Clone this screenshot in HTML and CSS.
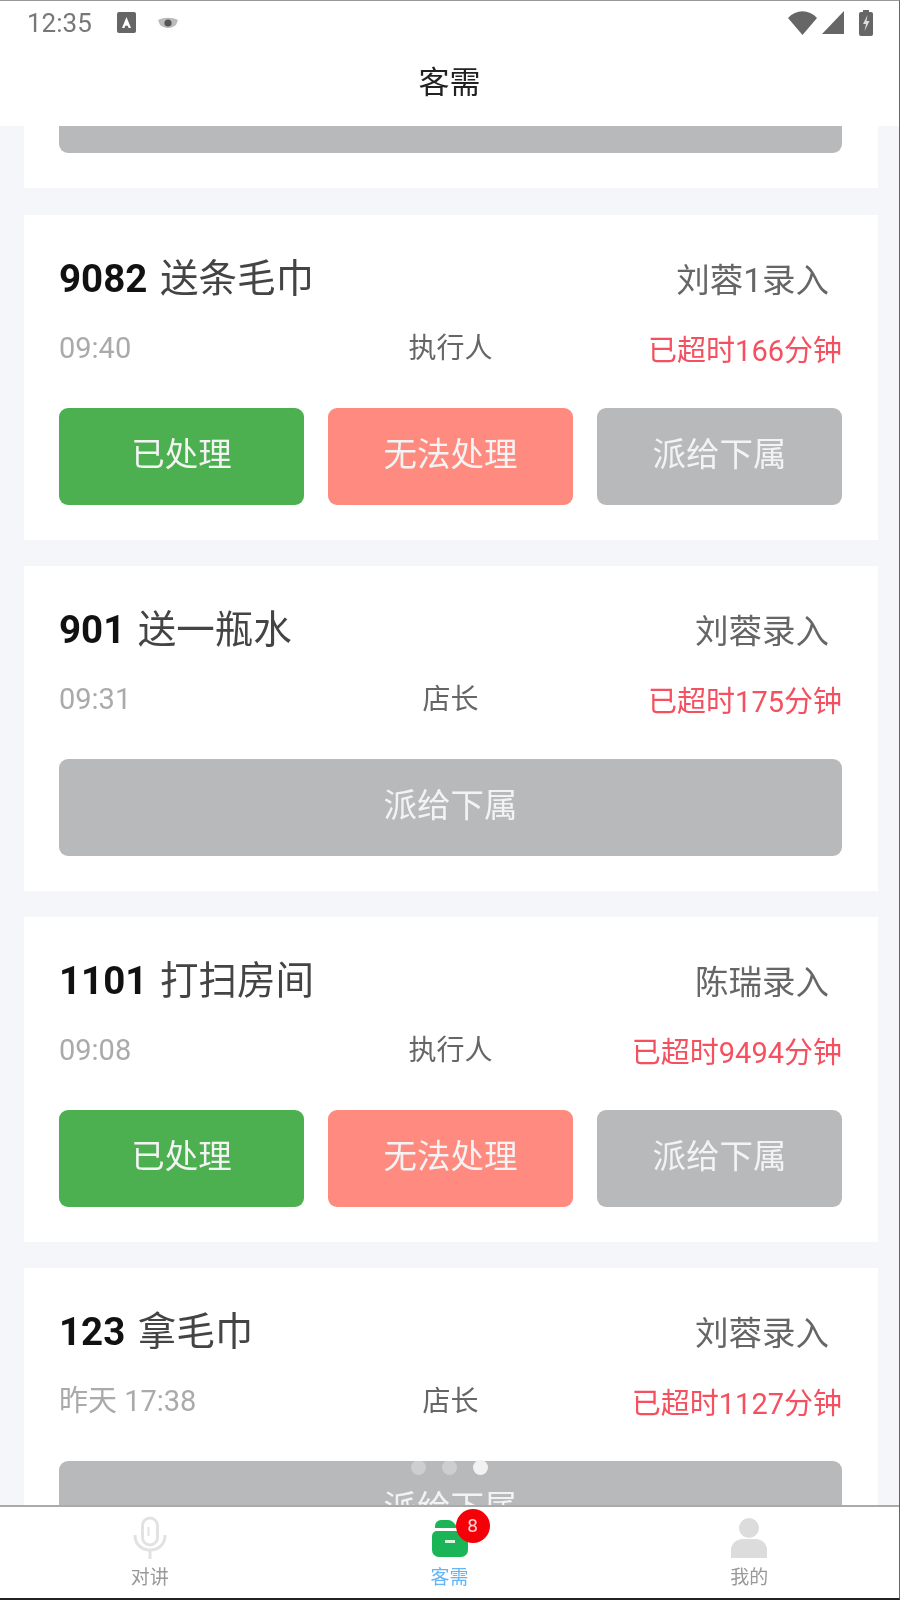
FILE: index.html
```html
<!DOCTYPE html>
<html lang="zh-CN">
<head>
<meta charset="UTF-8">
<meta name="viewport" content="width=device-width, initial-scale=1.0">
<title>客需</title>
<link rel="stylesheet" href="styles.css">
</head>
<body>
<div class="screen">

  <!-- Status bar -->
  <div class="status-bar">
    <div class="status-left">
      <span class="clock">12:35</span>
      <svg class="icon-a" viewBox="0 0 19 21"><rect width="19" height="21" rx="2" fill="#666"/><path d="M9.5 5 14 16h-2.4l-.8-2.2H8.2L7.4 16H5z" fill="#fff"/></svg>
      <svg class="icon-eye" viewBox="0 0 22 12"><path d="M1 3c6-3 14-3 20 0l-2 5c-5 4-11 4-16 0z" fill="#bbb"/><circle cx="11" cy="6" r="3.6" fill="#555"/></svg>
    </div>
    <div class="status-right">
      <svg class="icon-wifi" viewBox="0 0 29 24"><path d="M0 7C8-2 21-2 29 7L14.500 24z" fill="#666"/></svg>
      <svg class="icon-signal" viewBox="0 0 22 23"><path d="M22 0v23H0z" fill="#666"/></svg>
      <svg class="icon-battery" viewBox="0 0 14 26"><path d="M4 0h6v2h2a2 2 0 0 1 2 2v20a2 2 0 0 1-2 2H2a2 2 0 0 1-2-2V4a2 2 0 0 1 2-2h2z" fill="#666"/><path d="M8.500 5 4 14h3l-1.500 7L10.500 11H7.500z" fill="#ddd"/></svg>
    </div>
  </div>

  <!-- Header -->
  <div class="title-bar">客需</div>

  <!-- List -->
  <div class="list">
    <div class="card card-tail">
      <div class="btn btn-gray btn-tail"></div>
    </div>

    <div class="card">
      <div class="row-top">
        <div class="task"><b>9082</b> 送条毛巾</div>
        <div class="author">刘蓉1录入</div>
      </div>
      <div class="row-info">
        <span class="time">09:40</span>
        <span class="role">执行人</span>
        <span class="late">已超时166分钟</span>
      </div>
      <div class="actions">
        <div class="btn btn-green">已处理</div>
        <div class="btn btn-red">无法处理</div>
        <div class="btn btn-gray">派给下属</div>
      </div>
    </div>

    <div class="card">
      <div class="row-top">
        <div class="task"><b>901</b> 送一瓶水</div>
        <div class="author">刘蓉录入</div>
      </div>
      <div class="row-info">
        <span class="time">09:31</span>
        <span class="role">店长</span>
        <span class="late">已超时175分钟</span>
      </div>
      <div class="actions">
        <div class="btn btn-gray">派给下属</div>
      </div>
    </div>

    <div class="card">
      <div class="row-top">
        <div class="task"><b>1101</b> 打扫房间</div>
        <div class="author">陈瑞录入</div>
      </div>
      <div class="row-info">
        <span class="time">09:08</span>
        <span class="role">执行人</span>
        <span class="late">已超时9494分钟</span>
      </div>
      <div class="actions">
        <div class="btn btn-green">已处理</div>
        <div class="btn btn-red">无法处理</div>
        <div class="btn btn-gray">派给下属</div>
      </div>
    </div>

    <div class="card">
      <div class="row-top">
        <div class="task"><b>123</b> 拿毛巾</div>
        <div class="author">刘蓉录入</div>
      </div>
      <div class="row-info">
        <span class="time">昨天 17:38</span>
        <span class="role">店长</span>
        <span class="late">已超时1127分钟</span>
      </div>
      <div class="actions">
        <div class="btn btn-gray">派给下属</div>
      </div>
    </div>

    <!-- Pager dots -->
    <div class="dots">
      <span class="dot"></span>
      <span class="dot"></span>
      <span class="dot dot-on"></span>
    </div>
  </div>

  <!-- Bottom nav -->
  <div class="tabbar">
    <div class="tab">
      <svg class="tab-icon" viewBox="0 0 36 44"><rect x="10.500" y="2" width="15" height="27" rx="7.500" fill="none" stroke="#e2e2e2" stroke-width="3"/><path d="M3 19c0 9 6 15 15 15s15-6 15-15" fill="none" stroke="#e2e2e2" stroke-width="3"/><path d="M18 34v9" stroke="#e2e2e2" stroke-width="3"/><path d="M16.500 11v9" stroke="#e2e2e2" stroke-width="2"/></svg>
      <span class="tab-label">对讲</span>
    </div>
    <div class="tab tab-on">
      <svg class="tab-icon" viewBox="0 0 36 44"><path d="M3 10a6 6 0 0 1 6-6h7c3 0 5 2 7 4l3 4H3z" fill="#1bb558"/><path d="M5 15h26a5 5 0 0 1 5 5v14a7 7 0 0 1-7 7H7a7 7 0 0 1-7-7V20a5 5 0 0 1 5-5z" fill="#1bb558"/><rect x="13" y="24" width="10" height="3" fill="#d7f3e2"/></svg>
      <span class="tab-label">客需</span>
      <span class="badge">8</span>
    </div>
    <div class="tab">
      <svg class="tab-icon" viewBox="0 0 36 44"><circle cx="18" cy="12" r="10" fill="#dcdcdc"/><path d="M12 23h12c7 0 12 5 12 11v8H0v-8c0-6 5-11 12-11z" fill="#dcdcdc"/></svg>
      <span class="tab-label">我的</span>
    </div>
  </div>

</div>
</body>
</html>
```

FILE: styles.css
```css
/* Page */
* {
  box-sizing: border-box;
}

body {
  margin: 0;
  background-color: #fff;
  font-family: Roboto, "Noto Sans CJK SC", sans-serif;
}

.screen {
  display: flex;
  flex-direction: column;
  width: 900px;
  height: 1600px;
  overflow: hidden;
  background-color: #f4f6fa;
  border-top: 1px solid #999;
  border-right: 1px solid #666;
  border-bottom: 2px solid #222;
  filter: blur(0.5px); /* the reference is a soft, upscaled capture */
}

/* Status bar */
.status-bar {
  display: flex;
  justify-content: space-between;
  align-items: center;
  height: 43px;
  padding: 0 26px 0 27px;
  background-color: #fff;
}

.status-left,
.status-right {
  display: flex;
  align-items: center;
}

.clock {
  font-size: 26px;
  color: #777;
}

.icon-a {
  width: 19px;
  height: 21px;
  margin-left: 25px;
}

.icon-eye {
  width: 22px;
  height: 12px;
  margin-left: 21px;
}

.icon-wifi {
  width: 29px;
  height: 24px;
}

.icon-signal {
  width: 22px;
  height: 23px;
  margin-left: 5px;
}

.icon-battery {
  width: 14px;
  height: 26px;
  margin-left: 15px;
}

/* Header */
.title-bar {
  height: 82px;
  padding-top: 14px;
  background-color: #fff;
  font-size: 31px;
  line-height: 50px;
  text-align: center;
  color: #222;
}

/* List */
.list {
  position: relative;
  flex: 1;
  overflow: hidden;
  padding: 0 21px 0 24px;
}

.card {
  height: 325px;
  margin-bottom: 26px;
  padding: 0 36px 0 35px;
  background-color: #fff;
}

.card-tail {
  height: 62px;
  margin-bottom: 27px;
}

.row-top {
  display: flex;
  justify-content: space-between;
  align-items: center;
  height: 60px;
  padding-top: 30px;
  box-sizing: content-box;
}

.task {
  font-size: 38.5px;
  color: #444;
}

.task b {
  margin-right: 3px;
  color: #111;
}

.author {
  margin-top: 5px;
  margin-right: 13px;
  font-size: 33.5px;
  color: #666;
}

.row-info {
  display: grid;
  grid-template-columns: 1fr auto 1fr;
  align-items: center;
  height: 40px;
  margin-top: 20px;
  font-size: 29px;
  line-height: 40px;
}

.time {
  color: #aaa;
}

.role {
  margin-top: 2px;
  font-size: 28px;
  color: #666;
}

.late {
  margin-top: 6px;
  text-align: right;
  color: #f4505f;
}

.actions {
  display: flex;
  gap: 24px;
  margin-top: 43px;
}

.btn {
  flex: 1;
  height: 97px;
  border-radius: 9px;
  font-size: 33.5px;
  line-height: 93px;
  text-align: center;
  color: #f3f3f3;
}

.btn-green {
  background-color: #4caf50;
}

.btn-red {
  background-color: #ff8a80;
}

.btn-gray {
  background-color: #b7b9bb;
}

.btn-tail {
  height: 27px;
  border-radius: 0 0 9px 9px;
}

/* Pager dots */
.dots {
  position: absolute;
  left: 411px;
  bottom: 30px;
  display: flex;
  gap: 16px;
}

.dot {
  width: 15px;
  height: 15px;
  border-radius: 50%;
  background-color: rgba(255, 255, 255, 0.3);
}

.dot-on {
  background-color: #f2f2f2;
}

/* Bottom nav */
.tabbar {
  display: flex;
  height: 93px;
  background-color: #fff;
  border-top: 2px solid #aaa;
}

.tab {
  position: relative;
  flex: 1;
  display: flex;
  flex-direction: column;
  align-items: center;
  padding-top: 9px;
}

.tab-icon {
  width: 36px;
  height: 44px;
}

.tab-label {
  margin-top: 5px;
  font-size: 19px;
  line-height: 26px;
  color: #999;
}

.tab-on .tab-label {
  color: #64b5f6;
}

.badge {
  position: absolute;
  top: 2px;
  left: 156px;
  width: 34px;
  height: 34px;
  border-radius: 50%;
  background-color: #f40009;
  font-size: 19px;
  line-height: 34px;
  text-align: center;
  color: #ffd5d5;
}
```
